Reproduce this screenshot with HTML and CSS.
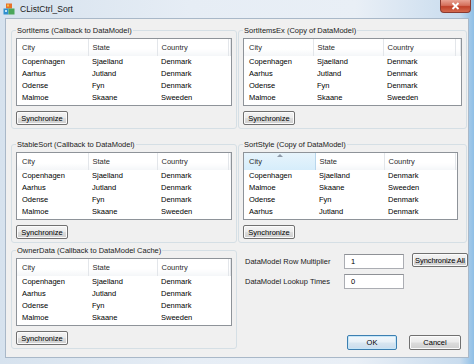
FILE: index.html
```html
<!DOCTYPE html>
<html lang="en">
<head>
  <meta charset="UTF-8">
  <title>CListCtrl_Sort</title>
  <link rel="stylesheet" href="styles.css">
</head>
<body>
  <div class="window">
    <div class="titlebar">
      <svg class="app-icon" width="12" height="12" viewBox="0 0 12 12">
        <rect x="3" y="0.5" width="6" height="5" fill="#e8722a"/>
        <rect x="4" y="1.5" width="2" height="2" fill="#f6c24a"/>
        <rect x="0.5" y="5.5" width="5" height="6" fill="#2f8fcf"/>
        <rect x="5.5" y="5.5" width="6" height="6" fill="#4aa65a"/>
        <rect x="2" y="7" width="2" height="2" fill="#bfe3f7"/>
      </svg>
      <span class="title">CListCtrl_Sort</span>
      <div class="close">
        <svg width="9" height="8" viewBox="0 0 9 8">
          <path d="M1.5 1 L7.5 7 M7.5 1 L1.5 7" stroke="#fff" stroke-width="1.8"/>
        </svg>
      </div>
    </div>

    <div class="client">
      <!-- row 1 -->
      <fieldset class="group">
        <legend>SortItems (Callback to DataModel)</legend>
        <div class="list">
          <table>
            <colgroup><col class="c1"><col class="c2"><col class="c3"><col></colgroup>
            <thead><tr><th>City</th><th>State</th><th>Country</th><th></th></tr></thead>
            <tbody>
              <tr><td>Copenhagen</td><td>Sjaelland</td><td>Denmark</td><td></td></tr>
              <tr><td>Aarhus</td><td>Jutland</td><td>Denmark</td><td></td></tr>
              <tr><td>Odense</td><td>Fyn</td><td>Denmark</td><td></td></tr>
              <tr><td>Malmoe</td><td>Skaane</td><td>Sweeden</td><td></td></tr>
            </tbody>
          </table>
        </div>
        <button class="btn sync">Synchronize</button>
      </fieldset>

      <fieldset class="group">
        <legend>SortItemsEx (Copy of DataModel)</legend>
        <div class="list wide">
          <table>
            <colgroup><col class="c1"><col class="c2"><col class="c3"><col></colgroup>
            <thead><tr><th>City</th><th>State</th><th>Country</th><th></th></tr></thead>
            <tbody>
              <tr><td>Copenhagen</td><td>Sjaelland</td><td>Denmark</td><td></td></tr>
              <tr><td>Aarhus</td><td>Jutland</td><td>Denmark</td><td></td></tr>
              <tr><td>Odense</td><td>Fyn</td><td>Denmark</td><td></td></tr>
              <tr><td>Malmoe</td><td>Skaane</td><td>Sweeden</td><td></td></tr>
            </tbody>
          </table>
        </div>
        <button class="btn sync">Synchronize</button>
      </fieldset>

      <!-- row 2 -->
      <fieldset class="group">
        <legend>StableSort (Callback to DataModel)</legend>
        <div class="list">
          <table>
            <colgroup><col class="c1"><col class="c2"><col class="c3"><col></colgroup>
            <thead><tr><th>City</th><th>State</th><th>Country</th><th></th></tr></thead>
            <tbody>
              <tr><td>Copenhagen</td><td>Sjaelland</td><td>Denmark</td><td></td></tr>
              <tr><td>Aarhus</td><td>Jutland</td><td>Denmark</td><td></td></tr>
              <tr><td>Odense</td><td>Fyn</td><td>Denmark</td><td></td></tr>
              <tr><td>Malmoe</td><td>Skaane</td><td>Sweeden</td><td></td></tr>
            </tbody>
          </table>
        </div>
        <button class="btn sync">Synchronize</button>
      </fieldset>

      <fieldset class="group">
        <legend>SortStyle (Copy of DataModel)</legend>
        <div class="list narrow">
          <table>
            <colgroup><col class="c1"><col class="c2"><col class="c3"><col></colgroup>
            <thead><tr><th class="sorted">City<span class="sort-arrow"></span></th><th>State</th><th>Country</th><th></th></tr></thead>
            <tbody>
              <tr><td>Copenhagen</td><td>Sjaelland</td><td>Denmark</td><td></td></tr>
              <tr><td>Malmoe</td><td>Skaane</td><td>Sweeden</td><td></td></tr>
              <tr><td>Odense</td><td>Fyn</td><td>Denmark</td><td></td></tr>
              <tr><td>Aarhus</td><td>Jutland</td><td>Denmark</td><td></td></tr>
            </tbody>
          </table>
        </div>
        <button class="btn sync">Synchronize</button>
      </fieldset>

      <!-- row 3 -->
      <fieldset class="group">
        <legend>OwnerData (Callback to DataModel Cache)</legend>
        <div class="list">
          <table>
            <colgroup><col class="c1"><col class="c2"><col class="c3"><col></colgroup>
            <thead><tr><th>City</th><th>State</th><th>Country</th><th></th></tr></thead>
            <tbody>
              <tr><td>Copenhagen</td><td>Sjaelland</td><td>Denmark</td><td></td></tr>
              <tr><td>Aarhus</td><td>Jutland</td><td>Denmark</td><td></td></tr>
              <tr><td>Odense</td><td>Fyn</td><td>Denmark</td><td></td></tr>
              <tr><td>Malmoe</td><td>Skaane</td><td>Sweeden</td><td></td></tr>
            </tbody>
          </table>
        </div>
        <button class="btn sync">Synchronize</button>
      </fieldset>

      <div class="settings">
        <div class="form">
          <label class="field-label">DataModel Row Multiplier</label>
          <div class="edit">1</div>
          <button class="btn sync-all">Synchronize All</button>
          <label class="field-label">DataModel Lookup Times</label>
          <div class="edit">0</div>
        </div>
        <div class="footer">
          <button class="btn ok">OK</button>
          <button class="btn cancel">Cancel</button>
        </div>
      </div>
    </div>
  </div>
</body>
</html>
```

FILE: styles.css
```css
body {
  margin: 0;
  padding: 0;
  background: #9cc4e6;
  font-family: 'Liberation Sans', Arial, sans-serif;
  font-size: 7.5px;
  color: #000;
}

.window {
  width: 474px;
  height: 364px;
  box-sizing: border-box;
  padding: 0 5px 6px 5px;
  display: flex;
  flex-direction: column;
  background: linear-gradient(to right, #d6e2ee 0%, #e6edf5 40%, #e9eff6 75%, #c9dcee 97%, #8fbfe6 100%);
}

.titlebar {
  height: 18px;
  display: flex;
  align-items: flex-start;
}

.app-icon {
  margin: 3px 0 0 -2px;
}

.title {
  margin: 3px 0 0 5px;
  font-size: 8.5px;
  line-height: 12px;
  color: #1a1a1a;
}

.close {
  margin-left: auto;
  margin-right: -2px;
  width: 29px;
  height: 12px;
  border: 1px solid #8a3a30;
  border-top: none;
  border-radius: 0 0 4px 4px;
  background: linear-gradient(#e9a293 0%, #d5705c 45%, #c0412a 55%, #d46a4e 100%);
  display: flex;
  align-items: center;
  justify-content: center;
}

.client {
  flex: 1;
  box-sizing: border-box;
  border: 1px solid #a9b8c8;
  background: #f0f0f0;
  padding: 5px 1px 6px 5px;
  display: grid;
  grid-template-columns: 226px 229px;
  grid-template-rows: 114px 106px 1fr;
  column-gap: 1px;
}

.group {
  align-self: start;
  margin: 0;
  min-width: 0;
  padding: 1px 4px 3px 4px;
  border: 1px solid #d5dfe5;
  border-radius: 3px;
}

.group legend {
  padding: 0 1px;
  line-height: 13px;
  color: #1a1a1a;
}

.list {
  border: 1px solid #8e9399;
  background: #fff;
  padding-bottom: 1px;
}

.list table {
  width: 100%;
  table-layout: fixed;
  border-collapse: collapse;
}

.list col.c1 { width: 71px; }
.list col.c2 { width: 69px; }
.list col.c3 { width: 71px; }

.list.wide col.c1 { width: 69px; }
.list.wide col.c2 { width: 70px; }
.list.wide col.c3 { width: 72px; }

.list.narrow table { width: 213px; }
.list.narrow { width: 213px; }

.list th {
  height: 17px;
  padding: 0 0 0 4px;
  text-align: left;
  font-weight: normal;
  color: #2b2b2b;
  border-right: 1px solid #e3e6ea;
  background: linear-gradient(#ffffff 0%, #ffffff 60%, #f4f6f8 100%);
  position: relative;
}

.list th:first-child,
.list td:first-child {
  padding-left: 5px;
}

.list th.sorted {
  background: linear-gradient(#e7f4fc 0%, #d6edfb 100%);
  border-right-color: #b8d6ec;
}

.sort-arrow {
  position: absolute;
  top: 1px;
  left: 33px;
  width: 0;
  height: 0;
  border-left: 3px solid transparent;
  border-right: 3px solid transparent;
  border-bottom: 3px solid #8e9aa8;
}

.list td {
  height: 12px;
  padding: 0 0 0 4px;
  line-height: 12px;
  white-space: nowrap;
  overflow: hidden;
}

.btn {
  font-family: inherit;
  font-size: 7.5px;
  color: #000;
  height: 14px;
  padding: 0;
  white-space: nowrap;
  border: 1px solid #707070;
  border-radius: 2px;
  background: linear-gradient(#f4f4f4 0%, #ebebeb 48%, #dddddd 52%, #cfcfcf 100%);
  box-shadow: inset 0 0 0 1px #fbfbfb;
}

.sync {
  display: block;
  width: 52px;
  margin-top: 5px;
}

.settings {
  display: flex;
  flex-direction: column;
  padding: 10px 6px 0 7px;
}

.form {
  display: grid;
  grid-template-columns: 91px 60px 56px;
  grid-auto-rows: 15px;
  column-gap: 8px;
  row-gap: 5px;
  align-items: center;
}

.field-label {
  color: #1a1a1a;
  white-space: nowrap;
}

.edit {
  height: 15px;
  box-sizing: border-box;
  border: 1px solid #abadb3;
  border-top-color: #8e9196;
  background: #fff;
  padding-left: 6px;
  line-height: 13px;
}

.sync-all {
  align-self: start;
  margin-top: -1px;
  width: 56px;
  letter-spacing: -0.1px;
}

.footer {
  margin-top: auto;
  display: flex;
  justify-content: flex-end;
  gap: 12px;
  padding-bottom: 1px;
}

.ok,
.cancel {
  height: 15px;
}

.ok {
  width: 50px;
  border-color: #3c7fb1;
  box-shadow: inset 0 0 0 1px #c6e6f8;
  background: linear-gradient(#f2f7fb 0%, #e7f0f7 48%, #d8e6f1 52%, #cadced 100%);
}

.cancel {
  width: 52px;
}
```
